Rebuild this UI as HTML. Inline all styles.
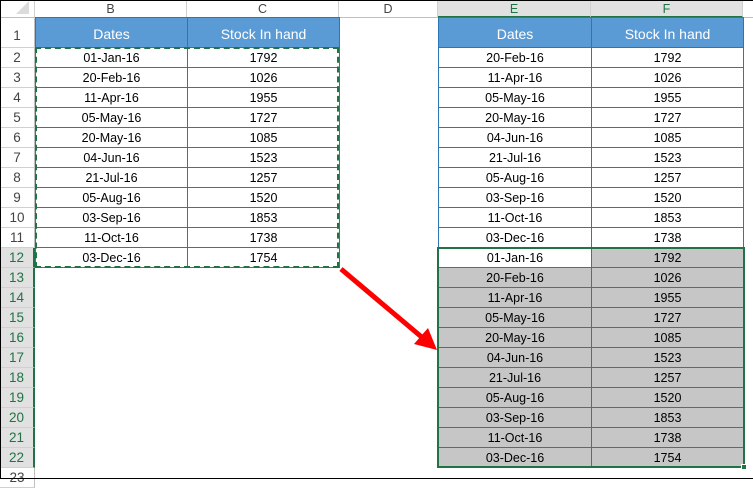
<!DOCTYPE html>
<html><head><style>
*{margin:0;padding:0;box-sizing:border-box}
body{width:753px;height:479px;overflow:hidden;background:#fff;font-family:"Liberation Sans",sans-serif;font-size:12.5px;color:#000;position:relative}
.frame{position:absolute;left:0;top:0;width:753px;height:479px;border:1px solid #000;border-right:none;pointer-events:none;z-index:20}
.ch{position:absolute;top:0;height:18px;border-right:1px solid #d0d0d0;border-bottom:1px solid #bfbfbf;text-align:center;line-height:18px;color:#444;background:#fff}
.ch.sel{background:#e1e1e1;color:#217346;border-bottom:2px solid #217346}
.rh{position:absolute;left:0;width:35px;border-bottom:1px solid #d0d0d0;border-right:1px solid #bfbfbf;text-align:center;color:#444;font-size:13.5px;background:#fff}
.rh.sel{background:#e1e1e1;color:#217346;border-right:2px solid #217346}
table{position:absolute;border-collapse:collapse;table-layout:fixed}
td{border:1px solid #2e75b6;text-align:center;height:20px;padding:0;font-size:12.5px}
tr.h td{background:#5b9bd5;color:#fff;height:30px;font-size:14px;padding-top:2px}
td.g{background:#c6c6c6}
</style></head><body>
<div class="ch" style="left:0;width:35px"><svg width="16" height="14" style="position:absolute;right:3px;bottom:2px"><polygon points="14,0 14,13 1,13" fill="#dcdcdc"/></svg></div>
<div class="ch" style="left:35px;width:152px">B</div>
<div class="ch" style="left:187px;width:152px">C</div>
<div class="ch" style="left:339px;width:99px">D</div>
<div class="ch sel" style="left:438px;width:153px">E</div>
<div class="ch sel" style="left:591px;width:152px">F</div>
<div class="ch" style="left:743px;width:20px"></div>

<div class="rh" style="top:18px;height:30px;line-height:36px">1</div>
<div class="rh" style="top:48px;height:20px;line-height:20px">2</div>
<div class="rh" style="top:68px;height:20px;line-height:20px">3</div>
<div class="rh" style="top:88px;height:20px;line-height:20px">4</div>
<div class="rh" style="top:108px;height:20px;line-height:20px">5</div>
<div class="rh" style="top:128px;height:20px;line-height:20px">6</div>
<div class="rh" style="top:148px;height:20px;line-height:20px">7</div>
<div class="rh" style="top:168px;height:20px;line-height:20px">8</div>
<div class="rh" style="top:188px;height:20px;line-height:20px">9</div>
<div class="rh" style="top:208px;height:20px;line-height:20px">10</div>
<div class="rh" style="top:228px;height:20px;line-height:20px">11</div>
<div class="rh sel" style="top:248px;height:20px;line-height:20px">12</div>
<div class="rh sel" style="top:268px;height:20px;line-height:20px">13</div>
<div class="rh sel" style="top:288px;height:20px;line-height:20px">14</div>
<div class="rh sel" style="top:308px;height:20px;line-height:20px">15</div>
<div class="rh sel" style="top:328px;height:20px;line-height:20px">16</div>
<div class="rh sel" style="top:348px;height:20px;line-height:20px">17</div>
<div class="rh sel" style="top:368px;height:20px;line-height:20px">18</div>
<div class="rh sel" style="top:388px;height:20px;line-height:20px">19</div>
<div class="rh sel" style="top:408px;height:20px;line-height:20px">20</div>
<div class="rh sel" style="top:428px;height:20px;line-height:20px">21</div>
<div class="rh sel" style="top:448px;height:20px;line-height:20px">22</div>
<div class="rh" style="top:468px;height:20px;line-height:20px">23</div>

<table style="left:35px;top:17px;width:304px">
<col style="width:152px"><col style="width:152px">
<tr class="h"><td>Dates</td><td>Stock In hand</td></tr>
<tr><td>01-Jan-16</td><td>1792</td></tr>
<tr><td>20-Feb-16</td><td>1026</td></tr>
<tr><td>11-Apr-16</td><td>1955</td></tr>
<tr><td>05-May-16</td><td>1727</td></tr>
<tr><td>20-May-16</td><td>1085</td></tr>
<tr><td>04-Jun-16</td><td>1523</td></tr>
<tr><td>21-Jul-16</td><td>1257</td></tr>
<tr><td>05-Aug-16</td><td>1520</td></tr>
<tr><td>03-Sep-16</td><td>1853</td></tr>
<tr><td>11-Oct-16</td><td>1738</td></tr>
<tr><td>03-Dec-16</td><td>1754</td></tr>
</table>

<table style="left:438px;top:17px;width:305px">
<col style="width:153px"><col style="width:152px">
<tr class="h"><td>Dates</td><td>Stock In hand</td></tr>
<tr><td>20-Feb-16</td><td>1792</td></tr>
<tr><td>11-Apr-16</td><td>1026</td></tr>
<tr><td>05-May-16</td><td>1955</td></tr>
<tr><td>20-May-16</td><td>1727</td></tr>
<tr><td>04-Jun-16</td><td>1085</td></tr>
<tr><td>21-Jul-16</td><td>1523</td></tr>
<tr><td>05-Aug-16</td><td>1257</td></tr>
<tr><td>03-Sep-16</td><td>1520</td></tr>
<tr><td>11-Oct-16</td><td>1853</td></tr>
<tr><td>03-Dec-16</td><td>1738</td></tr>
<tr><td>01-Jan-16</td><td class="g">1792</td></tr>
<tr><td class="g">20-Feb-16</td><td class="g">1026</td></tr>
<tr><td class="g">11-Apr-16</td><td class="g">1955</td></tr>
<tr><td class="g">05-May-16</td><td class="g">1727</td></tr>
<tr><td class="g">20-May-16</td><td class="g">1085</td></tr>
<tr><td class="g">04-Jun-16</td><td class="g">1523</td></tr>
<tr><td class="g">21-Jul-16</td><td class="g">1257</td></tr>
<tr><td class="g">05-Aug-16</td><td class="g">1520</td></tr>
<tr><td class="g">03-Sep-16</td><td class="g">1853</td></tr>
<tr><td class="g">11-Oct-16</td><td class="g">1738</td></tr>
<tr><td class="g">03-Dec-16</td><td class="g">1754</td></tr>
</table>

<div style="position:absolute;left:35px;top:47px;width:304px;height:221px;border:2px dashed #217346"></div>
<div style="position:absolute;left:437px;top:247px;width:308px;height:221px;border:2px solid #217346"></div>
<div style="position:absolute;left:741px;top:464px;width:6px;height:6px;background:#217346;border:1px solid #fff"></div>

<svg style="position:absolute;left:0;top:0" width="753" height="479">
<line x1="341" y1="269" x2="424" y2="339" stroke="#ff0000" stroke-width="5"/>
<polygon points="437,350 414,344 428,328" fill="#ff0000"/>
</svg>
<div class="frame"></div>
</body></html>
